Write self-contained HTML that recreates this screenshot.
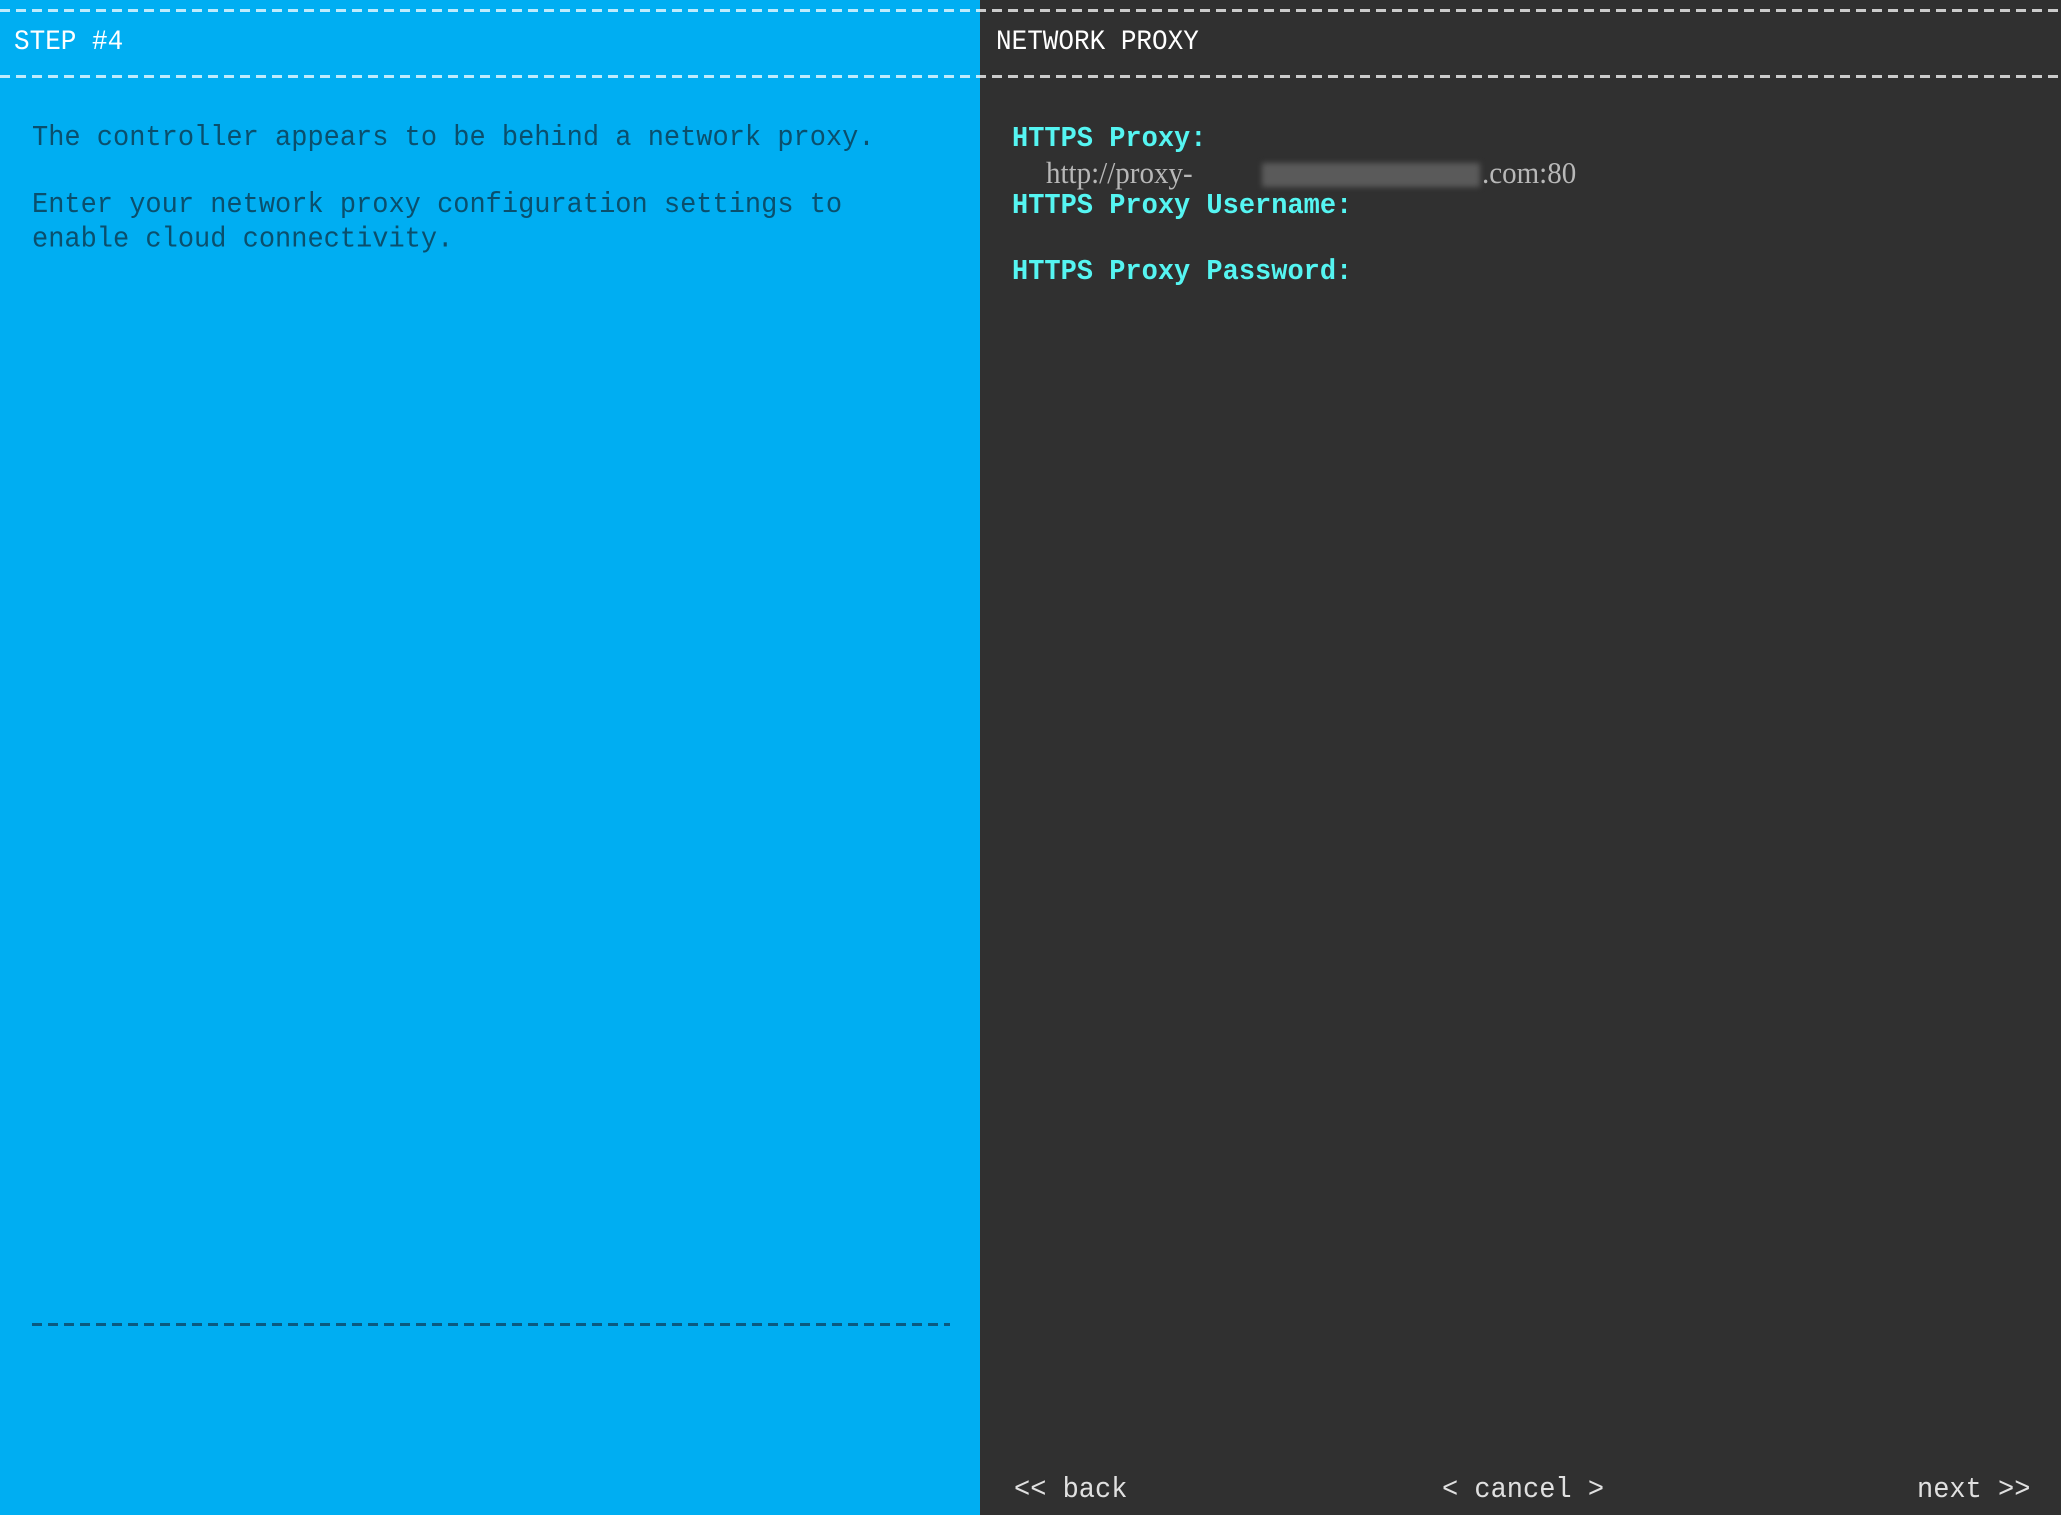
<!DOCTYPE html>
<html><head><meta charset="utf-8"><style>
html,body{margin:0;padding:0;width:2061px;height:1515px;overflow:hidden;background:#303030;}
.l{position:absolute;left:0;top:0;width:980px;height:1515px;background:#00aef2;}
.r{position:absolute;left:980px;top:0;width:1081px;height:1515px;background:#303030;}
.dash{position:absolute;height:3px;background:repeating-linear-gradient(90deg,rgba(255,255,255,.75) 0 10px,transparent 10px 16px);}
.t{position:absolute;font-family:"Liberation Mono",monospace;font-size:27px;white-space:pre;line-height:33px;transform:scaleY(1.05);transform-origin:left top;}
.hd{color:#fff;font-size:26px;}
.body{color:#0a4f6d;}
.cy{color:#55f5f2;font-weight:bold;}
.url{color:#b8b8b8;font-family:"Liberation Serif",serif;font-size:29px;}
.ft{color:#e0e0e0;}
</style></head><body>
<div class="l"></div><div class="r"></div>
<div class="dash" style="left:0;top:9px;width:2061px"></div>
<div class="dash" style="left:0;top:75px;width:2061px"></div>
<div class="dash" style="left:32px;top:1323px;width:918px;background:repeating-linear-gradient(90deg,#0a5a80 0 10px,transparent 10px 16px);"></div>
<div class="t hd" style="left:14px;top:25px">STEP #4</div>
<div class="t hd" style="left:996px;top:25px">NETWORK PROXY</div>
<div class="t body" style="left:32px;top:122px">The controller appears to be behind a network proxy.</div>
<div class="t body" style="left:32px;top:189px">Enter your network proxy configuration settings to
enable cloud connectivity.</div>
<div class="t cy" style="left:1012px;top:123px">HTTPS Proxy:</div>
<div class="t url" style="left:1046px;top:157px">http://proxy-</div>
<div style="position:absolute;left:1262px;top:163px;width:218px;height:24px;background:#5a5a5a;filter:blur(3px)"></div>
<div class="t url" style="left:1482px;top:157px">.com:80</div>
<div class="t cy" style="left:1012px;top:190px">HTTPS Proxy Username:</div>
<div class="t cy" style="left:1012px;top:256px">HTTPS Proxy Password:</div>
<div class="t ft" style="left:1014px;top:1474px">&lt;&lt; back</div>
<div class="t ft" style="left:1442px;top:1474px">&lt; cancel &gt;</div>
<div class="t ft" style="left:1917px;top:1474px">next &gt;&gt;</div>
</body></html>
